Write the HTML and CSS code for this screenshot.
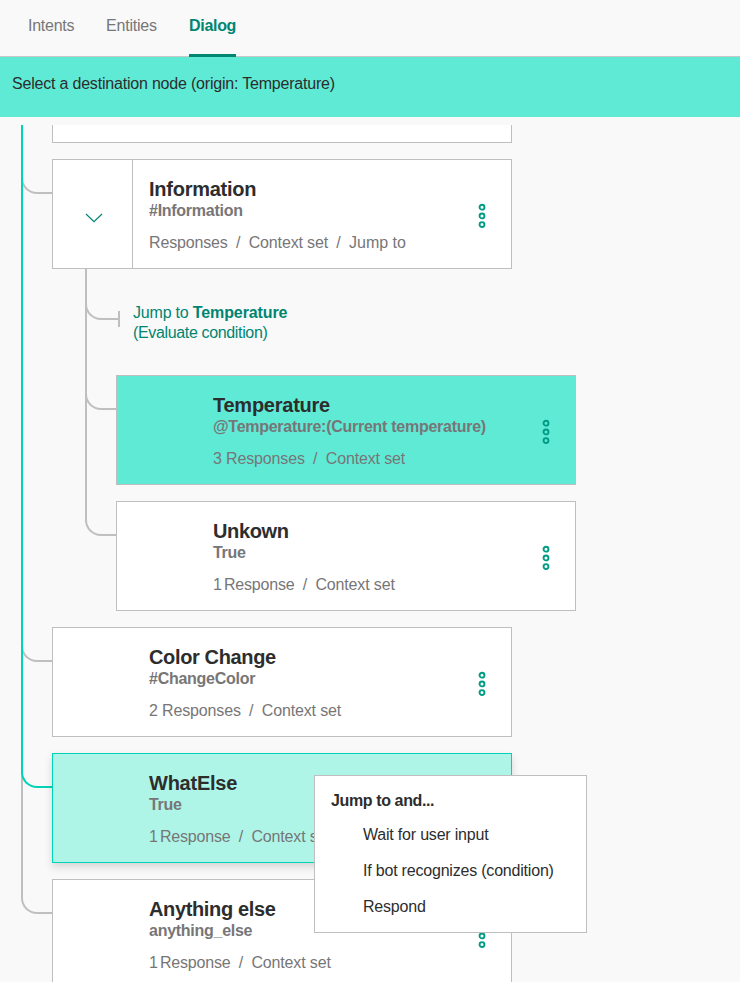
FILE: index.html
```html
<!DOCTYPE html>
<html lang="en">
<head>
<meta charset="utf-8">
<title>Dialog</title>
<link rel="stylesheet" href="styles.css">
</head>
<body>
<svg class="defs" aria-hidden="true">
  <symbol id="dots" viewBox="0 0 8 26"><g fill="none" stroke="currentColor" stroke-width="1.9"><circle cx="4" cy="4.2" r="2.45"/><circle cx="4" cy="12.9" r="2.45"/><circle cx="4" cy="21.6" r="2.45"/></g></symbol>
</svg>
<nav class="tabs">
  <a class="tab intents">Intents</a>
  <a class="tab entities">Entities</a>
  <a class="tab active">Dialog</a>
</nav>
<div class="banner"><span>Select a destination node (origin: Temperature)</span></div>
<main class="tree">
  <section class="node first"><div class="card cut"></div></section>
  <section class="node">
    <div class="card">
      <div class="toggle open"><svg width="18" height="10" viewBox="0 0 18 10"><path d="M1 1l8 7.7L17 1" fill="none" stroke="currentColor" stroke-width="1.2"/></svg></div>
      <div class="info"><h2>Information</h2><h3>#Information</h3><p><span>Responses</span><i>/</i><span>Context set</span><i>/</i><span class="jump-tag">Jump to</span></p></div>
      <svg class="more"><use href="#dots"/></svg>
    </div>
    <div class="children">
      <div class="jump"><p>Jump to <b>Temperature</b></p><p class="how">(Evaluate condition)</p></div>
      <section class="node">
        <div class="card origin">
          <div class="toggle"></div>
          <div class="info"><h2>Temperature</h2><h3>@Temperature:(Current temperature)</h3><p><span>3 Responses</span><i>/</i><span>Context set</span></p></div>
          <svg class="more"><use href="#dots"/></svg>
        </div>
      </section>
      <section class="node">
        <div class="card">
          <div class="toggle"></div>
          <div class="info"><h2 class="snug">Unkown</h2><h3>True</h3><p><span class="one">1 Response</span><i>/</i><span>Context set</span></p></div>
          <svg class="more"><use href="#dots"/></svg>
        </div>
      </section>
    </div>
  </section>
  <section class="node">
    <div class="card">
      <div class="toggle"></div>
      <div class="info"><h2 class="snug">Color Change</h2><h3>#ChangeColor</h3><p><span>2 Responses</span><i>/</i><span>Context set</span></p></div>
      <svg class="more"><use href="#dots"/></svg>
    </div>
  </section>
  <section class="node selected">
    <div class="card">
      <div class="toggle"></div>
      <div class="info"><h2>WhatElse</h2><h3>True</h3><p><span class="one">1 Response</span><i>/</i><span>Context set</span></p></div>
    </div>
    <div class="menu">
      <h4>Jump to and...</h4>
      <a>Wait for user input</a>
      <a>If bot recognizes (condition)</a>
      <a>Respond</a>
    </div>
  </section>
  <section class="node">
    <div class="card">
      <div class="toggle"></div>
      <div class="info"><h2 class="snug">Anything else</h2><h3>anything_else</h3><p><span class="one">1 Response</span><i>/</i><span>Context set</span></p></div>
      <svg class="more"><use href="#dots"/></svg>
    </div>
  </section>
</main>
</body>
</html>
```
FILE: styles.css
```css
*, *::before, *::after { box-sizing: border-box; }
body {
  margin: 0;
  height: 982px;
  overflow: hidden;
  display: flex;
  flex-direction: column;
  background: #f9f9f9;
  color: #2d2d2d;
  font: 16px/20px "Liberation Sans", Arial, sans-serif;
  letter-spacing: -0.2px;
}
h2, h3, h4, p { margin: 0; }
.defs { position: absolute; width: 0; height: 0; }

.tabs {
  flex: none;
  display: flex;
  gap: 32px;
  height: 57px;
  padding-left: 28px;
  border-bottom: 1px solid #c8c8c8;
}
.tab { height: 57px; padding-top: 16px; color: #777677; white-space: nowrap; }
.intents { width: 46px; letter-spacing: -0.25px; }
.entities { width: 51px; }
.tab.active { width: 47px; color: #008571; font-weight: bold; border-bottom: 3px solid #008571; letter-spacing: -0.3px; }

.banner { flex: none; height: 60px; padding: 17px 12px; background: #5fead6; }

.tree { flex: 1; margin-top: 8px; padding-left: 21px; overflow: hidden; }
.node { position: relative; padding-left: 31px; margin-bottom: 16px; }
.node::before {
  content: "";
  position: absolute;
  left: 0;
  top: -965px;
  width: 31px;
  height: 1000px;
  border: solid #c0bfc0;
  border-width: 0 0 2px 2px;
  border-bottom-left-radius: 16px;
}
.node.first::before { display: none; }
.card {
  position: relative;
  display: flex;
  width: 460px;
  height: 110px;
  border: 1px solid #c0bfc0;
  background: #fff;
}
.card.cut { height: 18px; border-top: 0; }
.toggle { width: 80px; display: flex; align-items: center; justify-content: center; padding: 8px 0 0 2px; color: #008571; }
.toggle.open { border-right: 1px solid #c0bfc0; }
.info { flex: 1; padding: 17px 0 0 16px; white-space: nowrap; color: #777677; }
.info h2 { color: #2d2d2d; font-size: 20px; line-height: 24px; letter-spacing: -0.25px; }
.info h2.snug { letter-spacing: -0.36px; }
.info h3 { font-size: 16px; line-height: 20px; letter-spacing: -0.27px; }
.info p { display: flex; margin-top: 12px; letter-spacing: -0.15px; }
.info i { width: 21px; text-align: center; font-style: normal; }
.info .one { word-spacing: -2px; letter-spacing: -0.2px; }
.info .jump-tag { letter-spacing: 0; }
.more { width: 8px; height: 26px; margin: 43px 25px 0 0; color: #009b85; }
.origin { background: #5fead6; }

.children { margin-left: 33px; overflow: hidden; }
.children .node:last-child { margin-bottom: 0; }
.jump { position: relative; height: 106px; padding: 34px 0 0 48px; color: #008571; }
.jump b { letter-spacing: -0.1px; }
.how { letter-spacing: -0.35px; }
.jump::before {
  content: "";
  position: absolute;
  left: 0;
  top: -20px;
  width: 33px;
  height: 71px;
  border: solid #c0bfc0;
  border-width: 0 0 2px 2px;
  border-bottom-left-radius: 16px;
}
.jump::after { content: ""; position: absolute; left: 33px; top: 42px; width: 2px; height: 16px; background: #c0bfc0; }

.selected { z-index: 2; }
.selected::before { border-color: #00d4b6; }
.selected .card { background: #aef5e8; border-color: #00d4b6; box-shadow: 0 4px 8px rgba(0, 0, 0, .15); }
.menu {
  position: absolute;
  left: 293px;
  top: 22px;
  width: 273px;
  height: 158px;
  padding: 15px 16px;
  border: 1px solid #c0bfc0;
  background: #fff;
}
.menu h4 { font-size: 16px; margin-bottom: 14px; letter-spacing: -0.38px; }
.menu a { display: block; margin: 0 0 16px 32px; white-space: nowrap; }
```
